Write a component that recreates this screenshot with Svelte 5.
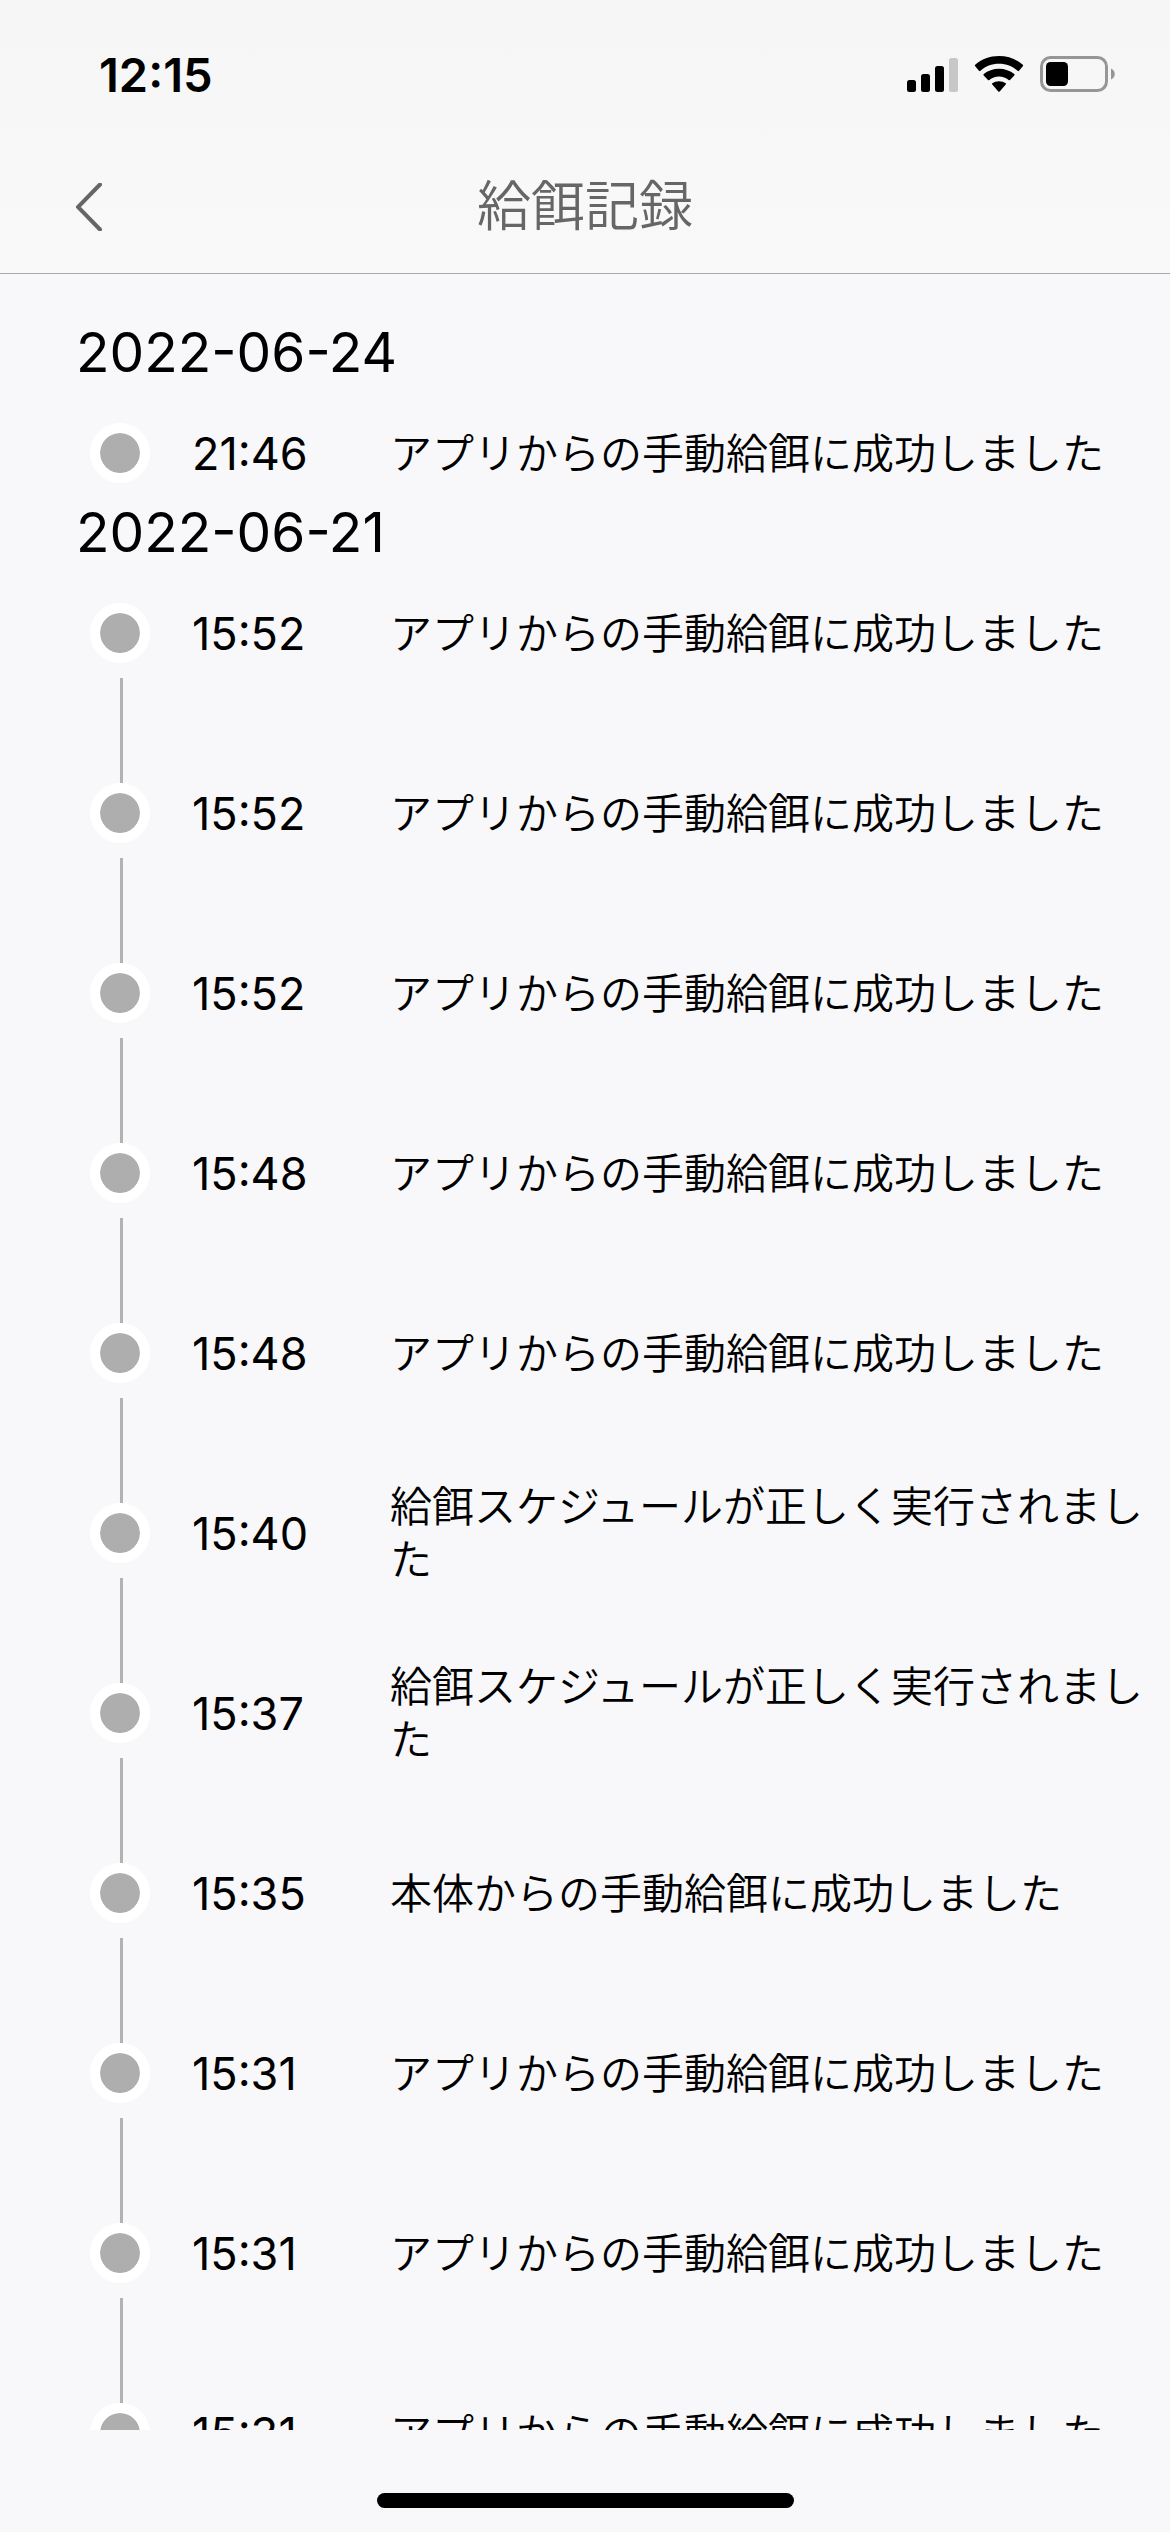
<script>
  const manual = 'アプリからの手動給餌に成功しました';
  const scheduled = '給餌スケジュールが正しく実行されました';
  const device = '本体からの手動給餌に成功しました';

  const days = [
    {
      date: '2022-06-24',
      entries: [{ time: '21:46', text: manual }]
    },
    {
      date: '2022-06-21',
      entries: [
        { time: '15:52', text: manual },
        { time: '15:52', text: manual },
        { time: '15:52', text: manual },
        { time: '15:48', text: manual },
        { time: '15:48', text: manual },
        { time: '15:40', text: scheduled },
        { time: '15:37', text: scheduled },
        { time: '15:35', text: device },
        { time: '15:31', text: manual },
        { time: '15:31', text: manual },
        { time: '15:31', text: manual }
      ]
    }
  ];

  const goBack = () => history.back();
</script>

<div class="screen">
  <header>
    <div class="status">
      <span class="clock">12:15</span>
      <div class="indicators">
        <svg width="51" height="36" viewBox="0 0 51 36" aria-hidden="true">
          <rect x="0" y="24" width="9" height="12" rx="2.5" />
          <rect x="14" y="18" width="9" height="18" rx="2.5" />
          <rect x="28" y="10" width="9" height="26" rx="2.5" />
          <rect x="42" y="2" width="9" height="34" rx="2.5" fill="#c7c7c7" />
        </svg>
        <svg width="50" height="36" viewBox="0 0 50 36" aria-hidden="true">
          <path d="M1.2 10.2a1 1 0 0 1 0-1.4C7.400 3.200 15.800 0 25 0s17.600 3.200 23.800 8.800a1 1 0 0 1 0 1.400L45 14.800a1 1 0 0 1-1.400 0C38.600 10.300 32.200 7.700 25 7.700S11.400 10.300 6.400 14.800a1 1 0 0 1-1.400 0z" />
          <path d="M9.700 19.400a1 1 0 0 1 0-1.400C13.800 14.700 19.200 12.700 25 12.700s11.200 2 15.300 5.300a1 1 0 0 1 0 1.400L36 23.900a1 1 0 0 1-1.300 0C32 21.800 28.700 20.400 25 20.400S18 21.800 15.300 23.900a1 1 0 0 1-1.300 0z" />
          <path d="M18.300 28.600a1 1 0 0 1 0-1.300C20.100 26 22.400 25.200 25 25.200s4.900.8 6.700 2.100a1 1 0 0 1 0 1.300L25.700 35.500a1 1 0 0 1-1.400 0z" />
        </svg>
        <svg width="76" height="36" viewBox="0 0 76 36" aria-hidden="true">
          <rect x="1.500" y="1.500" width="65" height="33" rx="9" fill="none" stroke="#969696" stroke-width="3" />
          <rect x="6" y="6" width="22" height="24" rx="4.500" />
          <path d="M71 12.500c5 1.800 5 9.200 0 11z" fill="#969696" />
        </svg>
      </div>
    </div>
    <nav>
      <button on:click={goBack} aria-label="戻る">
        <svg width="26" height="48" viewBox="0 0 26 48" aria-hidden="true">
          <path d="M24 1.500 2 24 24 46.500" fill="none" stroke="#666" stroke-width="4" stroke-linecap="round" />
        </svg>
      </button>
      <h1>給餌記録</h1>
    </nav>
  </header>

  <main>
    {#each days as day}
      <section>
        <h2>{day.date}</h2>
        <ul>
          {#each day.entries as entry}
            <li>
              <div class="entry">
                <span class="dot"></span>
                <time>{entry.time}</time>
                <p>{entry.text}</p>
              </div>
            </li>
          {/each}
        </ul>
      </section>
    {/each}
  </main>

  <footer><span class="home"></span></footer>
</div>

<style>
  :global(body) {
    margin: 0;
    background: #f8f8fb;
  }

  .screen {
    display: flex;
    flex-direction: column;
    height: 100vh;
    color: #000;
    font-family: Inter, "Noto Sans CJK JP", sans-serif;
  }

  header {
    background: linear-gradient(#f6f6f6, #f9f9f9);
    border-bottom: 1px solid #aaa;
  }

  .status {
    display: flex;
    justify-content: space-between;
    align-items: center;
    height: 148px;
    box-sizing: border-box;
    padding: 0 54px 0 99px;
  }

  .clock {
    font-size: 47px;
    font-weight: 600;
  }

  .indicators {
    display: flex;
    gap: 16px;
  }

  nav {
    display: grid;
    grid-template-columns: 120px 1fr 120px;
    align-items: center;
    height: 117px;
    padding-bottom: 8px;
  }

  button {
    display: flex;
    padding: 24px 18px 24px 76px;
    border: 0;
    background: none;
  }

  h1 {
    margin: 0;
    color: #666;
    font-size: 54px;
    font-weight: 350;
    line-height: 80px;
    text-align: center;
  }

  main {
    flex: 1;
    min-height: 0;
    overflow: hidden;
    padding: 44px 0 0 76px;
    box-sizing: border-box;
  }

  h2 {
    margin: 0 0 37px;
    font-size: 55px;
    font-weight: 400;
    line-height: 68px;
  }

  ul {
    margin: 0;
    padding: 0 0 15px 14px;
    list-style: none;
  }

  .entry {
    display: grid;
    grid-template-columns: 60px 156px 1fr;
    grid-template-rows: 60px;
    column-gap: 42px;
    align-items: center;
  }

  /* connector down to the next dot */
  li:not(:last-child)::after {
    content: "";
    display: block;
    width: 3px;
    height: 105px;
    margin: 15px 0 0 30px;
    background: #b2b2b2;
  }

  .dot {
    width: 40px;
    height: 40px;
    border: 10px solid #fff;
    border-radius: 50%;
    background: #aeaeae;
    background-clip: padding-box;
  }

  time {
    font-size: 45px;
  }

  p {
    margin: 0;
    font-size: 42px;
    font-weight: 350;
    line-height: 53px;
  }

  footer {
    display: flex;
    justify-content: center;
    padding: 63px 0 24px;
  }

  .home {
    width: 417px;
    height: 15px;
    border-radius: 8px;
    background: #000;
  }
</style>
